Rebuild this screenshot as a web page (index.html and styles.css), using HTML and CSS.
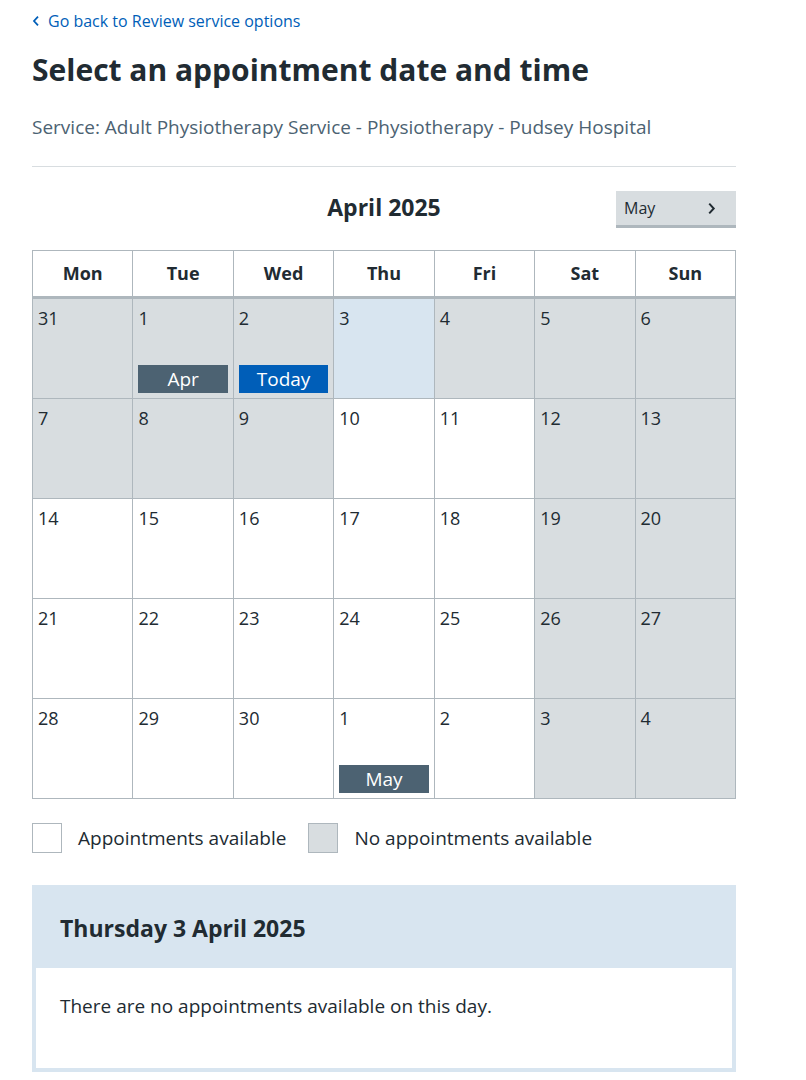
FILE: index.html
```html
<!DOCTYPE html>
<html lang="en">
<head>
<meta charset="utf-8">
<title>Select an appointment date and time</title>
<link rel="stylesheet" href="styles.css">
</head>
<body>
<main class="page">
  <a class="back" href="#">
    <svg class="back-icon" viewBox="0 0 10 14" width="8" height="12" aria-hidden="true"><path d="M7.5 1.5 L2.5 7 L7.5 12.5" fill="none" stroke="#005eb8" stroke-width="2.2"/></svg>
    <span>Go back to Review service options</span>
  </a>
  <h1 class="title">Select an appointment date and time</h1>
  <p class="service">Service: Adult Physiotherapy Service - Physiotherapy - Pudsey Hospital</p>
  <hr class="rule">

  <div class="month-bar">
    <h2 class="month">April 2025</h2>
    <button class="next" type="button"><span>May</span>
      <svg viewBox="0 0 10 14" width="9" height="13" aria-hidden="true"><path d="M2.5 1.5 L7.5 7 L2.5 12.5" fill="none" stroke="#212b32" stroke-width="2.2"/></svg>
    </button>
  </div>

  <div class="cal">
    <div class="head">Mon</div><div class="head">Tue</div><div class="head">Wed</div><div class="head">Thu</div><div class="head">Fri</div><div class="head">Sat</div><div class="head">Sun</div>

    <div class="day na">31</div>
    <div class="day na">1<span class="badge">Apr</span></div>
    <div class="day na">2<span class="badge today">Today</span></div>
    <div class="day sel">3</div>
    <div class="day na">4</div>
    <div class="day na">5</div>
    <div class="day na">6</div>

    <div class="day na">7</div>
    <div class="day na">8</div>
    <div class="day na">9</div>
    <div class="day">10</div>
    <div class="day">11</div>
    <div class="day na">12</div>
    <div class="day na">13</div>

    <div class="day">14</div>
    <div class="day">15</div>
    <div class="day">16</div>
    <div class="day">17</div>
    <div class="day">18</div>
    <div class="day na">19</div>
    <div class="day na">20</div>

    <div class="day">21</div>
    <div class="day">22</div>
    <div class="day">23</div>
    <div class="day">24</div>
    <div class="day">25</div>
    <div class="day na">26</div>
    <div class="day na">27</div>

    <div class="day">28</div>
    <div class="day">29</div>
    <div class="day">30</div>
    <div class="day">1<span class="badge">May</span></div>
    <div class="day">2</div>
    <div class="day na">3</div>
    <div class="day na">4</div>
  </div>

  <div class="legend">
    <span class="swatch"></span><span class="legend-text">Appointments available</span>
    <span class="swatch grey"></span><span class="legend-text">No appointments available</span>
  </div>

  <section class="panel">
    <h3 class="panel-title">Thursday 3 April 2025</h3>
    <div class="panel-body">There are no appointments available on this day.</div>
  </section>
</main>
</body>
</html>
```

FILE: styles.css
```css
* { box-sizing: border-box; }
html, body { margin: 0; padding: 0; background: #fff; }
body {
  font-family: "Open Sans", "Liberation Sans", Arial, sans-serif;
  color: #212b32;
}
.page {
  width: 704px;
  margin-left: 32px;
  padding-top: 11px;
}
.back {
  display: flex;
  align-items: center;
  gap: 8px;
  color: #005eb8;
  text-decoration: none;
  font-size: 16px;
  line-height: 20px;
  height: 20px;
}
.back-icon { flex: none; }
.title {
  margin: 19px 0 0;
  font-size: 30px;
  line-height: 40px;
  font-weight: 700;
}
.service {
  margin: 26px 0 0;
  font-size: 19px;
  line-height: 22px;
  color: #4c6272;
}
.rule {
  margin: 28px 0 0;
  border: 0;
  border-top: 1px solid #d8dde0;
  height: 0;
}
.month-bar {
  position: relative;
  height: 59px;
  margin-top: 24px;
  display: flex;
  justify-content: flex-end;
  align-items: flex-start;
}
.month {
  position: absolute;
  left: 0; right: 0; top: 1px;
  margin: 0;
  text-align: center;
  font-size: 23px;
  line-height: 30px;
  font-weight: 700;
}
.next {
  position: relative;
  width: 120px;
  height: 37px;
  display: flex;
  align-items: center;
  justify-content: space-between;
  padding: 0 20px 0 8px;
  border: 0;
  border-bottom: 3px solid #aeb7bd;
  background: #d8dde0;
  font-family: inherit;
  font-size: 16px;
  color: #212b32;
}
.cal {
  display: grid;
  grid-template-columns: repeat(7, 1fr);
  border: 1px solid #aeb7bd;
  border-right: 0;
}
.head {
  height: 48px;
  border-bottom: 3px solid #aeb7bd;
  border-right: 1px solid #aeb7bd;
  display: flex;
  align-items: center;
  justify-content: center;
  font-weight: 700;
  font-size: 18px;
  padding-bottom: 2px;
}
.day {
  height: 100px;
  border-right: 1px solid #aeb7bd;
  border-bottom: 1px solid #aeb7bd;
  padding: 7px 5px 5px 5px;
  font-size: 18px;
  line-height: 24px;
  display: flex;
  flex-direction: column;
  background: #fff;
}
.cal .day:nth-last-child(-n+7) { border-bottom: 0; height: 99px; }
.day.na { background: #d8dde0; }
.day.sel { background: #d8e5f0; }
.badge {
  margin-top: auto;
  height: 28px;
  background: #4c6272;
  color: #fff;
  font-size: 19px;
  line-height: 28px;
  text-align: center;
}
.badge.today { background: #005eb8; }
.legend {
  display: flex;
  align-items: center;
  margin-top: 24px;
  height: 30px;
}
.swatch {
  width: 30px;
  height: 30px;
  border: 1px solid #aeb7bd;
  background: #fff;
  flex: none;
}
.swatch.grey { background: #d8dde0; margin-left: 22px; }
.legend-text {
  margin-left: 16px;
  font-size: 19px;
}
.panel {
  margin-top: 32px;
  background: #d8e5f0;
  padding: 0 4px 4px;
}
.panel-title {
  margin: 0;
  height: 83px;
  padding: 2px 0 0 24px;
  display: flex;
  align-items: center;
  font-size: 23px;
  font-weight: 700;
}
.panel-body {
  background: #fff;
  height: 100px;
  padding: 26px 24px;
  font-size: 19px;
  line-height: 24px;
}
```
